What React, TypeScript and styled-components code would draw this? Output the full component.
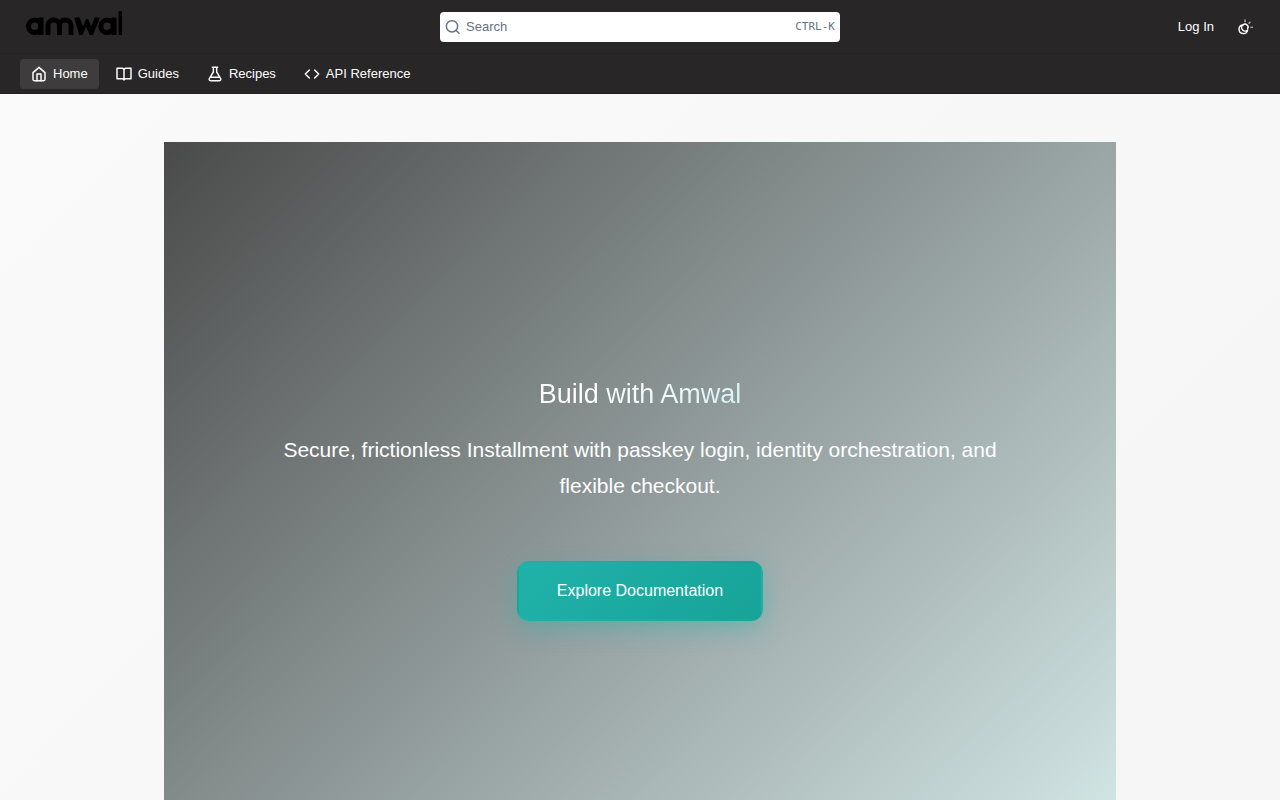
import React from "react";
import styled, { createGlobalStyle } from "styled-components";

const Global = createGlobalStyle`
  * { box-sizing: border-box; }
  body {
    margin: 0;
    font-family: "Liberation Sans", Arial, sans-serif;
    color: #ffffff;
    background: #fafafa;
  }
`;

const Page = styled.div`
  min-height: 100vh;
  display: flex;
  flex-direction: column;
`;

const Header = styled.header`
  background: #282627;
  border-bottom: 1px solid #232122;
`;

const TopBar = styled.div`
  display: grid;
  grid-template-columns: 1fr minmax(200px, 400px) 1fr;
  align-items: center;
  height: 54px;
  padding: 0 20px;
  border-bottom: 1px solid #232122;
`;

const LogoLink = styled.a`
  display: flex;
  justify-self: start;
  padding: 0 4px 8px;
`;

const SearchBox = styled.label`
  display: flex;
  align-items: center;
  gap: 5px;
  height: 30px;
  padding: 0 5px;
  border-radius: 4px;
  background: #ffffff;
  color: #637288;
`;

const SearchInput = styled.input`
  flex: 1;
  min-width: 0;
  padding: 0;
  border: 0;
  outline: 0;
  background: transparent;
  font: 13px/20px "Liberation Sans", Arial, sans-serif;
  color: #384248;
  &::placeholder { color: #637288; opacity: 1; }
`;

const Shortcut = styled.kbd`
  font: 11px/16px "DejaVu Sans Mono", monospace;
  color: #637288;
`;

const Actions = styled.div`
  display: flex;
  justify-content: flex-end;
  align-items: center;
  gap: 23px;
  padding-right: 7px;
`;

const LoginLink = styled.a`
  font-size: 13px;
  line-height: 20px;
  color: #ffffff;
  text-decoration: none;
`;

const ThemeButton = styled.button`
  display: flex;
  padding: 0;
  border: 0;
  background: transparent;
  color: #ffffff;
`;

const Nav = styled.nav`
  display: flex;
  gap: 6px;
  height: 39px;
  padding: 5px 20px 4px;
`;

const NavLink = styled.a<{ $active?: boolean }>`
  display: flex;
  align-items: center;
  gap: 6px;
  padding: 0 11px;
  border-radius: 4px;
  background: ${(p) => (p.$active ? "#3e3c3d" : "transparent")};
  font-size: 13px;
  line-height: 20px;
  color: #ffffff;
  text-decoration: none;
`;

const Main = styled.main`
  flex: 1;
  padding: 48px 24px;
  background: linear-gradient(135deg, #fafafa 0%, #f5f5f5 100%);
`;

const Hero = styled.section`
  display: flex;
  flex-direction: column;
  align-items: center;
  max-width: 952px;
  margin: 0 auto;
  padding: 230px 96px;
  background: linear-gradient(135deg, #4a4a4a 0%, #8b9494 46%, #d4e9e7 100%);
  text-align: center;
`;

const Title = styled.h1`
  margin: 0 0 16px;
  font-size: 27px;
  line-height: 44px;
  font-weight: 400;
  background: linear-gradient(135deg, #ffffff 30%, #d4f2f0 100%);
  background-clip: text;
  -webkit-background-clip: text;
  color: transparent;
`;

const Lead = styled.p`
  max-width: 760px;
  margin: 0 0 57px;
  font-size: 21px;
  line-height: 36px;
`;

const Cta = styled.button`
  height: 60px;
  padding: 0 38px;
  border: 2px solid transparent;
  border-radius: 12px;
  background: linear-gradient(135deg, #20b2aa 0%, #17a398 100%);
  box-shadow: 0 8px 24px rgba(32, 178, 170, 0.4);
  font: 16px/24px "Liberation Sans", Arial, sans-serif;
  color: #ffffff;
`;

const Icon = ({ children, size = 16 }: { children: React.ReactNode; size?: number }) => (
  <svg width={size} height={size} viewBox="0 0 24 24" fill="none" stroke="currentColor" strokeWidth="2.200" strokeLinecap="round" strokeLinejoin="round" aria-hidden="true">
    {children}
  </svg>
);

const Logo = () => (
  <svg width="100" height="26" viewBox="0 0 100 26" fill="none" stroke="#000000" strokeWidth="5" aria-label="amwal" role="img">
    <circle cx="10.700" cy="16.300" r="6.200" />
    <path d="M17 7.500V25M24 25V15.500a5.700 5.500 0 0 1 11.500 0V25M35.500 15.500a5.700 5.500 0 0 1 11.500 0V25" />
    <path d="M50.200 7.500h5.300l3.500 9 3-7.500h2.200l3 7.500 3.500-9h5.300l-7 17.500h-3.200l-3.700-8.200-3.700 8.200h-3.200Z" fill="#000000" stroke="none" />
    <circle cx="83" cy="16.300" r="6.200" />
    <path d="M90 7.500V25" />
    <path d="M96.300 1V25" strokeWidth="3.400" />
  </svg>
);

export default function App() {
  return (
    <>
      <Global />
      <Page>
        <Header>
          <TopBar>
            <LogoLink href="#"><Logo /></LogoLink>
            <SearchBox>
              <Icon><circle cx="10.500" cy="11" r="8.500" /><path d="m21 21.500-4.500-4.500" /></Icon>
              <SearchInput type="search" placeholder="Search" aria-label="Search" />
              <Shortcut>CTRL-K</Shortcut>
            </SearchBox>
            <Actions>
              <LoginLink href="#">Log In</LoginLink>
              <ThemeButton aria-label="Toggle theme">
                <Icon>
                  <path d="M8.500 9a6.500 6.500 0 1 0 7.500 7.500A4.800 4.800 0 0 1 8.500 9Z" />
                  <path d="M9 9a4.500 4.500 0 0 1 7 5.500" />
                  <path d="M12 1.500v2.500M19.500 5l-1.500 1.500M23 12.500h-2" opacity="0.6" />
                </Icon>
              </ThemeButton>
            </Actions>
          </TopBar>
          <Nav aria-label="Primary">
            <NavLink href="#" $active>
              <Icon><path d="M3 10 12 2l9 8v10a2 2 0 0 1-2 2H5a2 2 0 0 1-2-2Z" /><path d="M9 22v-10h6v10" /></Icon>
              Home
            </NavLink>
            <NavLink href="#">
              <Icon><path d="M1.500 3.500h7.500a3 3 0 0 1 3 3v14.500a3 3 0 0 0-3-2H1.500ZM22.500 3.500h-7.500a3 3 0 0 0-3 3v14.500a3 3 0 0 1 3-2h7.500Z" /></Icon>
              Guides
            </NavLink>
            <NavLink href="#">
              <Icon><path d="M8 2h8M9.500 2v7L3.500 19a2 2 0 0 0 1.700 3h13.600a2 2 0 0 0 1.700-3l-6-10V2M6.500 17h11" /></Icon>
              Recipes
            </NavLink>
            <NavLink href="#">
              <Icon><path d="m16 18 6-6-6-6M8 6l-6 6 6 6" /></Icon>
              API Reference
            </NavLink>
          </Nav>
        </Header>
        <Main>
          <Hero>
            <Title>Build with Amwal</Title>
            <Lead>Secure, frictionless Installment with passkey login, identity orchestration, and flexible checkout.</Lead>
            <Cta>Explore Documentation</Cta>
          </Hero>
        </Main>
      </Page>
    </>
  );
}
